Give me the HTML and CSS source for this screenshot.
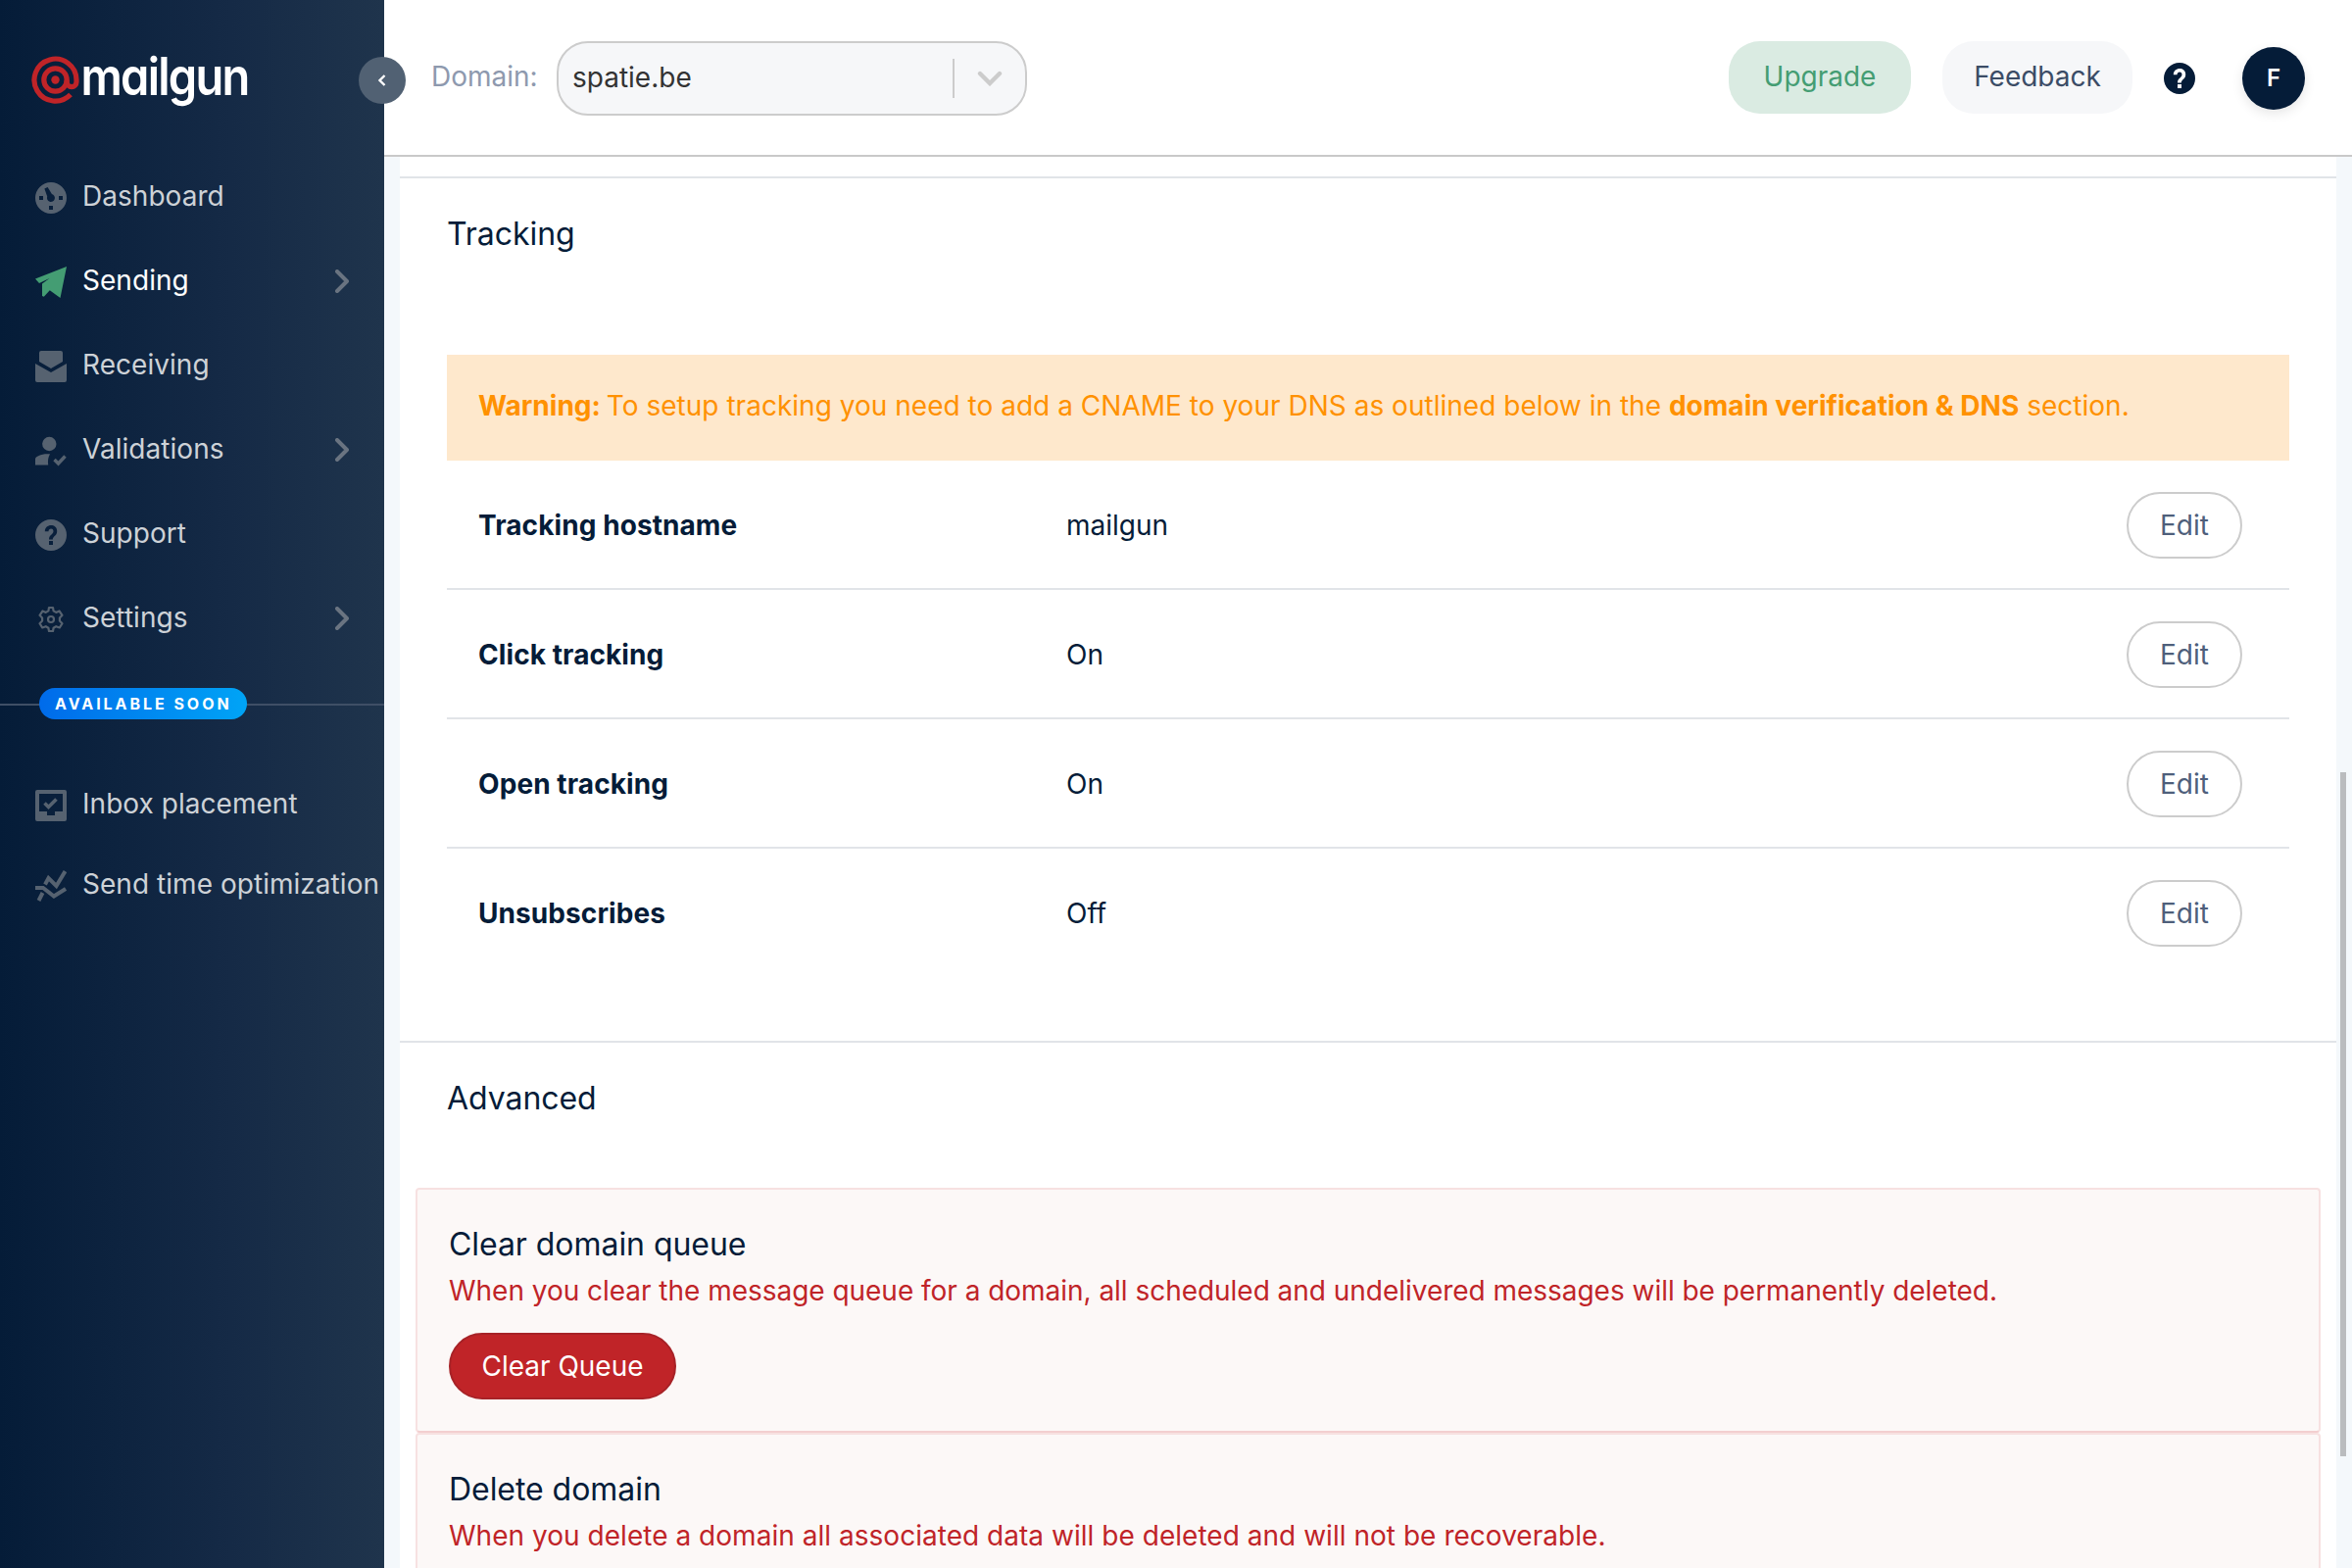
FILE: index.html
```html
<!DOCTYPE html>
<html lang="en">
<head>
<meta charset="utf-8">
<title>Domain settings</title>
<link rel="stylesheet" href="styles.css">
</head>
<body>
<aside class="sidebar">
  <a class="logo">
    <svg width="260" height="130" viewBox="0 -24 260 130">
      <g fill="none" stroke="#c02428" stroke-width="5.2">
        <circle cx="24.5" cy="42.5" r="11.7"/>
        <path d="M36.2 42.500v2.200a4.900 4.900 0 0 0 9.800 0v-2.200a21.500 21.500 0 1 0-6 15"/>
      </g>
      <circle cx="24.500" cy="42.500" r="4.200" fill="#c02428"/>
      <text class="logo-text" x="50.500" y="57.500" textLength="171" lengthAdjust="spacingAndGlyphs">mailgun</text>
    </svg>
  </a>
  <button class="collapse" aria-label="Collapse"><svg width="16" height="16" viewBox="0 0 16 16"><path d="M10.500 3 5.500 8l5 5" fill="none" stroke="#fff" stroke-width="2.400"/></svg></button>
  <nav class="nav">
    <a class="nav-item"><svg class="icon" viewBox="0 0 32 32"><path fill-rule="evenodd" d="M16 0a16 16 0 1 0 0 32 16 16 0 0 0 0-32ZM4 14h4v4H4Zm20 0h4v4h-4ZM14 24h4v4h-4ZM9.400 6.600l3.200-1.600 4.300 7.100a4 4 0 1 1-4.700 2.500Z"/></svg><span>Dashboard</span></a>
    <a class="nav-item active"><svg class="icon" viewBox="0 0 32 32"><path d="M32 0 25.500 32 14.800 24.300 8.800 30.800 7 30V17.500L14.500 12 4 17 0 12.500Z"/></svg><span>Sending</span><svg class="chev" viewBox="0 0 14 24"><path d="m2 2 10 10L2 22"/></svg></a>
    <a class="nav-item"><svg class="icon" viewBox="0 0 32 32"><path d="M6 0h20a2 2 0 0 1 2 2v9L16 18 4 11V2a2 2 0 0 1 2-2ZM0 13l16 9 16-9v17a2 2 0 0 1-2 2H2a2 2 0 0 1-2-2Z"/></svg><span>Receiving</span></a>
    <a class="nav-item"><svg class="icon" viewBox="0 0 32 32"><circle cx="14.300" cy="9" r="7.200"/><path d="M15 19.300c-2 3.500-2.300 7-1.800 11.200H0v-6c0-3 7-6 15-5.200Z"/><path d="m19.500 25 4 4 7-7.500" fill="none" stroke="currentColor" stroke-width="3.400"/></svg><span>Validations</span><svg class="chev" viewBox="0 0 14 24"><path d="m2 2 10 10L2 22"/></svg></a>
    <a class="nav-item"><svg class="icon" viewBox="0 0 32 32"><path fill-rule="evenodd" d="M16 0a16 16 0 1 0 0 32 16 16 0 0 0 0-32ZM14 22h4v4h-4ZM14 20.500c0-5 4.500-5 4.500-8.500 0-3.300-5-3.300-5 .3H9.800C9.800 4 22.200 4 22.200 12c0 5-4.400 5-4.400 8.500Z"/></svg><span>Support</span></a>
    <a class="nav-item"><svg class="icon" viewBox="0 0 32 32"><g fill="none" stroke="currentColor" stroke-width="2.200" stroke-linejoin="round"><path d="M14 4h4l.6 3.400 2.600 1.500 3.300-1.400 3 4.300-2.600 2.700v3l2.600 2.700-2.700 4.300-3.600-1.300-2.600 1.500L18 28h-4l-.6-3.300-2.600-1.500-3.600 1.300-2.700-4.300 2.600-2.700v-3l-2.600-2.700 3-4.300 3.300 1.400 2.600-1.500Z"/><circle cx="16" cy="16" r="3"/></g></svg><span>Settings</span><svg class="chev" viewBox="0 0 14 24"><path d="m2 2 10 10L2 22"/></svg></a>
  </nav>
  <div class="soon"><span class="badge">AVAILABLE SOON</span></div>
  <nav class="nav upcoming">
    <a class="nav-item"><svg class="icon" viewBox="0 0 32 32"><path fill-rule="evenodd" d="M2 0h28a2 2 0 0 1 2 2v28a2 2 0 0 1-2 2H2a2 2 0 0 1-2-2V2a2 2 0 0 1 2-2ZM4 4v18h8v4h8v-4h8V4Z"/><path d="m9.500 13.500 4 4 8-8" fill="none" stroke="currentColor" stroke-width="3.600"/></svg><span>Inbox placement</span></a>
    <a class="nav-item"><svg class="icon" viewBox="0 0 32 32"><path d="M0 18h8l11 8.500L31 19M3.500 31l4-8M10 14.500 13.500 8l8 8L30.500 1" fill="none" stroke="currentColor" stroke-width="4"/></svg><span>Send time optimization</span></a>
  </nav>
</aside>
<main class="main">
  <header class="topbar">
    <span class="domain-label">Domain:</span>
    <div class="select"><span class="select-value">spatie.be</span><i class="select-sep"></i><svg width="26" height="16" viewBox="0 0 26 16"><path d="m3 3 10 10L23 3" fill="none" stroke="#ccc" stroke-width="4.400" stroke-linecap="round"/></svg></div>
    <div class="actions">
      <button class="pill upgrade">Upgrade</button>
      <button class="pill feedback">Feedback</button>
      <svg class="help" viewBox="0 0 32 32"><path fill="#051c38" fill-rule="evenodd" d="M16 0a16 16 0 1 0 0 32 16 16 0 0 0 0-32ZM14 22h4v4h-4ZM14 20.500c0-5 4.500-5 4.500-8.500 0-3.300-5-3.300-5 .3H9.800C9.800 4 22.200 4 22.200 12c0 5-4.400 5-4.400 8.500Z"/></svg>
      <span class="avatar">F</span>
    </div>
  </header>
  <div class="scroller">
    <div class="sheet">
      <section class="section tracking">
        <h2>Tracking</h2>
        <p class="warning"><b class="warning-lead">Warning:</b> To setup tracking you need to add a CNAME to your DNS as outlined below in the <b>domain verification &amp; DNS</b> section.</p>
        <div class="row"><b>Tracking hostname</b><span>mailgun</span><button class="edit">Edit</button></div>
        <div class="row"><b>Click tracking</b><span>On</span><button class="edit">Edit</button></div>
        <div class="row"><b>Open tracking</b><span>On</span><button class="edit">Edit</button></div>
        <div class="row"><b>Unsubscribes</b><span>Off</span><button class="edit">Edit</button></div>
      </section>
      <section class="section advanced">
        <h2>Advanced</h2>
        <div class="danger">
          <h3>Clear domain queue</h3>
          <p class="tight">When you clear the message queue for a domain, all scheduled and undelivered messages will be permanently deleted.</p>
          <button class="clear">Clear Queue</button>
        </div>
        <div class="danger">
          <h3>Delete domain</h3>
          <p>When you delete a domain all associated data will be deleted and will not be recoverable.</p>
        </div>
      </section>
    </div>
    <div class="scrollbar"></div>
  </div>
</main>
</body>
</html>
```
FILE: styles.css
```css
* { box-sizing: border-box; }
body {
  margin: 0;
  width: 2400px;
  height: 1600px;
  overflow: hidden;
  display: flex;
  font: 400 28px/40px Inter, sans-serif;
  color: #051c38;
  background: #fff;
}
h2, h3, p { margin: 0; }
h2, h3 { font-size: 32px; font-weight: 400; line-height: 40px; letter-spacing: -.05px; }
b { font-weight: 700; }
button { font: inherit; border: 0; padding: 0; }
svg { display: block; flex: none; }

.sidebar {
  position: relative;
  flex: none;
  width: 392px;
  height: 1600px;
  background: linear-gradient(90deg, #051c38 0%, #152a46 60%, #1f344c 100%);
}
.logo { display: block; height: 157px; padding: 15px 0 0 32px; }
.logo-text {
  fill: #fff;
  font-size: 53px;
  font-weight: 600;
  letter-spacing: -2px;
  font-feature-settings: "cv11";
}
.collapse {
  position: absolute;
  left: 366px;
  top: 58px;
  width: 48px;
  height: 48px;
  border-radius: 50%;
  background: #516173;
  display: flex;
  align-items: center;
  justify-content: center;
}
.nav-item {
  display: flex;
  align-items: center;
  height: 86px;
  padding: 0 36px;
  gap: 16px;
  color: #cdd2d7;
  letter-spacing: .04px;
  white-space: nowrap;
}
.nav-item.active { color: #fff; }
.icon { width: 32px; height: 32px; margin-top: 4px; color: #566270; fill: currentColor; }
.active .icon { color: #449d73; }
.chev {
  width: 14px;
  height: 24px;
  margin: 2px 0 0 auto;
  fill: none;
  stroke: #6a7481;
  stroke-width: 4;
  stroke-linecap: round;
  stroke-linejoin: round;
}
.soon {
  display: flex;
  height: 32px;
  margin-top: 29px;
  padding-left: 40px;
  background: linear-gradient(#3f4f66, #3f4f66) 0 16px / 100% 2px no-repeat;
}
.badge {
  width: 212px;
  padding-left: 16px;
  border-radius: 16px;
  background: linear-gradient(90deg, #006bea, #00a4f6);
  color: #fff;
  font-size: 16px;
  font-weight: 700;
  line-height: 32px;
  letter-spacing: 2.95px;
}
.upcoming { margin-top: 45px; }
.upcoming .nav-item { height: 82px; padding-right: 0; }

.main { width: 2008px; height: 1600px; display: flex; flex-direction: column; }
.topbar {
  flex: none;
  display: flex;
  align-items: flex-start;
  height: 160px;
  padding: 42px 48px 0;
  border-bottom: 2px solid #c9c9c9;
}
.domain-label { width: 128px; margin-top: 16px; color: #8e99ae; }
.select {
  display: flex;
  align-items: center;
  width: 480px;
  height: 76px;
  padding: 0 23px 0 14px;
  border: 2px solid #ccc;
  border-radius: 32px;
  background: #f6f7f9;
  color: #333;
}
.select-value { padding-bottom: 2px; }
.select-sep { width: 2px; height: 40px; margin: 0 23px 0 auto; background: #ccc; }
.actions { display: flex; align-items: center; margin-left: auto; height: 76px; }
.pill { height: 74px; margin: 0 0 2px; border-radius: 32px; line-height: 72px; padding-bottom: 2px; }
.upgrade { width: 186px; margin-right: 32px; background: #daebe2; color: #449d73; }
.feedback { width: 194px; margin-right: 32px; background: #f6f7f9; color: #3b4c66; }
.help { width: 32px; height: 32px; margin-right: 48px; }
.avatar {
  width: 64px;
  height: 64px;
  border-radius: 50%;
  background: #051c38;
  color: #fff;
  font-size: 24px;
  font-weight: 600;
  line-height: 63px;
  text-align: center;
  box-shadow: 0 4px 12px rgba(0, 0, 0, .1);
}

.scroller {
  flex: 1;
  min-height: 0;
  display: flex;
  padding-left: 16px;
  background: #f4f8fb;
}
.sheet { width: 1976px; padding-top: 20px; background: #fff; }
.scrollbar { width: 6px; height: 698px; margin: 628px 0 0 4px; background: #babcbe; }
.section { border-top: 2px solid #e1e4e8; padding: 37px 48px 0; }
.tracking { height: 882px; }
.warning {
  height: 108px;
  margin-top: 103px;
  padding: 32px;
  background: #fee8cc;
  color: #ff9100;
  letter-spacing: .02px;
}
.warning-lead { margin-right: -2px; }
.row {
  display: grid;
  grid-template-columns: 600px 1fr 118px;
  align-items: center;
  height: 132px;
  padding: 2px 48px 0 32px;
  border-bottom: 2px solid #e1e4e8;
}
.row b { letter-spacing: .08px; }
.row:last-child { border-bottom: 0; height: 130px; }
.edit {
  height: 68px;
  border: 2px solid #ccc;
  border-radius: 34px;
  background: #fff;
  color: #4e5f7b;
}
.advanced { padding: 37px 16px 0; }
.advanced h2 { margin: 0 32px 71px; }
.danger {
  height: 250px;
  padding: 36px 32px 0;
  border: 2px solid #f7e1e1;
  border-bottom-color: #f3cfd0;
  border-radius: 4px;
  background: #fcf8f7;
}
.danger:last-child { height: 138px; border-bottom: 0; border-radius: 4px 4px 0 0; }
.danger p { margin: 7px 0 23px; color: #c02428; letter-spacing: .03px; }
.danger .tight { letter-spacing: -.03px; }
.clear {
  width: 232px;
  height: 68px;
  border: 2px solid #a72227;
  border-radius: 34px;
  background: #c02428;
  color: #fff;
}
```
